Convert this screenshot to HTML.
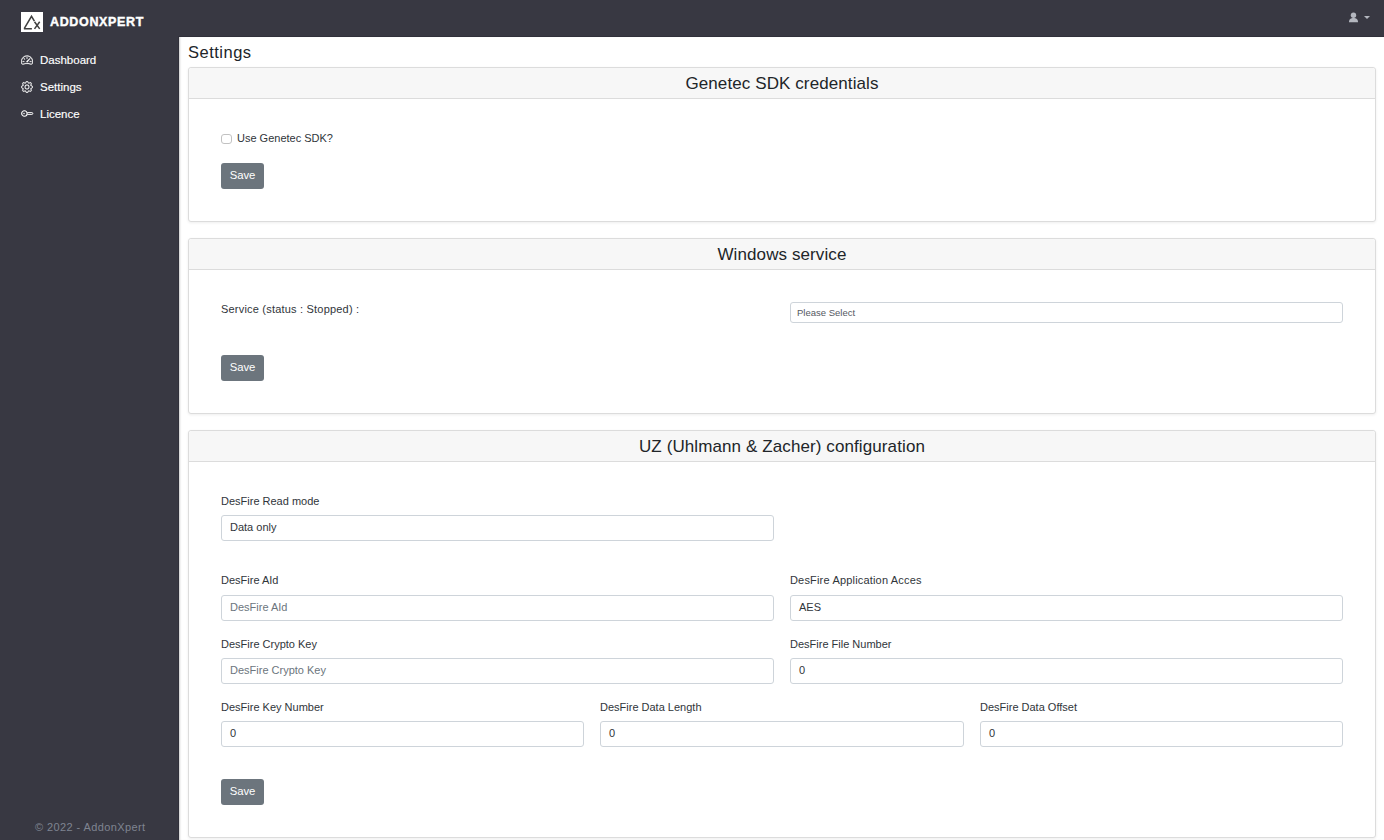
<!DOCTYPE html>
<html><head><meta charset="utf-8">
<style>
*{box-sizing:border-box;margin:0;padding:0}
html,body{width:1384px;height:840px;overflow:hidden;background:#fff;font-family:"Liberation Sans",sans-serif;color:#212529}
.abs{position:absolute;white-space:nowrap}
#top{position:absolute;left:0;top:0;width:1384px;height:37px;background:#383842}
#cline{position:absolute;left:178px;top:36px;width:1206px;height:804px;background:#30303a}
#content{position:absolute;left:179px;top:37px;width:1205px;height:803px;background:#fff;box-shadow:inset 2px 0 2px -1px rgba(0,0,0,.2)}
#side{position:absolute;left:0;top:37px;width:179px;height:803px;background:#383842}
.logo{position:absolute;left:21px;top:12px;width:22px;height:20px;background:#fff}
.brand{left:50px;top:15px;font-size:12.5px;line-height:15px;font-weight:700;color:#fff;letter-spacing:0.65px;-webkit-text-stroke:0.4px #fff}
.nav{left:40px;font-size:11.5px;line-height:14px;color:#fff;-webkit-text-stroke:0.15px #fff}
.foot{left:35px;top:820px;font-size:11px;line-height:14px;color:#7f8491;letter-spacing:0.4px}
.ptitle{left:188px;top:42px;font-size:16.5px;line-height:20px;color:#212529;letter-spacing:0.5px}
.card{position:absolute;left:188px;width:1188px;border:1px solid #dcdcdc;border-radius:3px;background:#fff;box-shadow:0 1px 3px rgba(0,0,0,.07)}
.ch{position:absolute;left:0;top:0;right:0;height:31px;background:#f7f7f7;border-bottom:1px solid #dcdcdc;border-radius:3px 3px 0 0;font-size:17px;line-height:31px;text-align:center;color:#212529;letter-spacing:0.1px}
.lbl{font-size:11px;line-height:13px;color:#30353a}
.inp{position:absolute;height:26px;border:1px solid #ced4da;border-radius:3px;background:#fff;font-size:11px;line-height:22px;padding-left:8px;color:#30353a}
.ph{color:#6c757d}
.btn{position:absolute;left:221px;width:43px;height:26px;background:#6c757d;border-radius:3px;color:#fff;font-size:11.3px;line-height:24px;text-align:center}
.cb{position:absolute;left:221px;top:134px;width:11px;height:10px;border:1px solid #c2c2c2;border-radius:3px;background:#fff}
</style></head><body>
<div id="top"></div>
<div id="side"></div>
<div id="cline"></div><div id="content"></div>
<div class="logo">
<svg width="22" height="20" viewBox="0 0 22 20" style="position:absolute;left:0;top:0">
<path d="M3.2 16.6 L10.5 4.3 L13.4 9.2 M2.9 16.7 L10.9 16.7" fill="none" stroke="#404040" stroke-width="1.5"/>
<path d="M13.5 9.7 L18.7 16.9 M18.7 9.7 L13.5 16.9" fill="none" stroke="#404040" stroke-width="1.5"/>
</svg>
</div>
<div class="abs brand">ADDONXPERT</div>
<!-- user icon -->
<svg class="abs" style="left:1344px;top:8px" width="20" height="20" viewBox="1344 8 20 20"><circle cx="1353.5" cy="15.2" r="2.7" fill="#b4b7bf"/><path d="M1349 22.2 C1349 19 1350.8 17.9 1353.5 17.9 C1356.2 17.9 1358 19 1358 22.2 Z" fill="#b4b7bf"/></svg>
<div class="abs" style="left:1363.8px;top:15.8px;width:0;height:0;border-top:3.7px solid #b4b7bf;border-left:3.7px solid transparent;border-right:3.7px solid transparent"></div>

<!-- sidebar nav -->
<svg class="abs" style="left:21px;top:54px" width="12" height="12" viewBox="0 0 16 16"><g fill="#fff" stroke="#fff" stroke-width="0.3">
<path d="M8 4a.5.5 0 0 1 .5.5V6a.5.5 0 0 1-1 0V4.5A.5.5 0 0 1 8 4zM3.732 5.732a.5.5 0 0 1 .707 0l.915.914a.5.5 0 1 1-.708.708l-.914-.915a.5.5 0 0 1 0-.707zM2 10a.5.5 0 0 1 .5-.5h1.586a.5.5 0 0 1 0 1H2.5A.5.5 0 0 1 2 10zm9.5 0a.5.5 0 0 1 .5-.5h1.5a.5.5 0 0 1 0 1H12a.5.5 0 0 1-.5-.5zm.754-4.246a.389.389 0 0 0-.527-.02L7.547 9.31a.91.91 0 1 0 1.302 1.258l3.434-4.297a.389.389 0 0 0-.029-.518z"/>
<path fill-rule="evenodd" d="M0 10a8 8 0 1 1 15.547 2.661c-.442 1.253-1.845 1.602-2.932 1.25C11.309 13.488 9.475 13 8 13c-1.474 0-3.310.488-4.615.911-1.087.352-2.490.003-2.932-1.25A7.988 7.988 0 0 1 0 10zm8-7a7 7 0 0 0-6.603 9.329c.203.575.923.876 1.680.630C4.397 12.533 6.358 12 8 12s3.604.532 4.923.96c.757.245 1.477-.056 1.680-.631A7 7 0 0 0 8 3z"/>
</g></svg>
<div class="abs nav" style="top:53px">Dashboard</div>
<svg class="abs" style="left:21px;top:80.5px" width="12" height="12" viewBox="0 0 16 16"><g fill="#fff" stroke="#fff" stroke-width="0.3">
<path d="M8 4.754a3.246 3.246 0 1 0 0 6.492 3.246 3.246 0 0 0 0-6.492zM5.754 8a2.246 2.246 0 1 1 4.492 0 2.246 2.246 0 0 1-4.492 0z"/>
<path d="M9.796 1.343c-.527-1.790-3.065-1.790-3.592 0l-.094.319a.873.873 0 0 1-1.255.520l-.292-.160c-1.640-.892-3.433.902-2.540 2.541l.159.292a.873.873 0 0 1-.520 1.255l-.319.094c-1.790.527-1.790 3.065 0 3.592l.319.094a.873.873 0 0 1 .520 1.255l-.160.292c-.892 1.640.901 3.434 2.541 2.540l.292-.159a.873.873 0 0 1 1.255.520l.094.319c.527 1.790 3.065 1.790 3.592 0l.094-.319a.873.873 0 0 1 1.255-.520l.292.160c1.640.893 3.434-.902 2.540-2.541l-.159-.292a.873.873 0 0 1 .520-1.255l.319-.094c1.790-.527 1.790-3.065 0-3.592l-.319-.094a.873.873 0 0 1-.520-1.255l.160-.292c.893-1.640-.902-3.433-2.541-2.540l-.292.159a.873.873 0 0 1-1.255-.520l-.094-.319zm-2.633.283c.246-.835 1.428-.835 1.674 0l.094.319a1.873 1.873 0 0 0 2.693 1.115l.291-.160c.764-.415 1.600.420 1.184 1.185l-.159.292a1.873 1.873 0 0 0 1.116 2.692l.318.094c.835.246.835 1.428 0 1.674l-.319.094a1.873 1.873 0 0 0-1.115 2.693l.160.291c.415.764-.420 1.600-1.185 1.184l-.291-.159a1.873 1.873 0 0 0-2.693 1.116l-.094.318c-.246.835-1.428.835-1.674 0l-.094-.319a1.873 1.873 0 0 0-2.692-1.115l-.292.160c-.764.415-1.600-.420-1.184-1.185l.159-.291A1.873 1.873 0 0 0 1.945 8.930l-.319-.094c-.835-.246-.835-1.428 0-1.674l.319-.094A1.873 1.873 0 0 0 3.060 4.377l-.160-.292c-.415-.764.420-1.600 1.185-1.184l.292.159a1.873 1.873 0 0 0 2.692-1.115l.094-.319z"/>
</g></svg>
<div class="abs nav" style="top:80px">Settings</div>
<svg class="abs" style="left:21px;top:109px" width="13" height="9" viewBox="0 0 13 9"><g fill="none" stroke="#fff">
<circle cx="3.4" cy="4.5" r="2.75" stroke-width="1.1"/>
<path d="M6.3 3.6 H10.9 A0.9 0.9 0 0 1 10.9 5.4 H6.3" stroke-width="0.95"/>
</g><circle cx="3" cy="4.5" r="0.75" fill="#fff"/></svg>
<div class="abs nav" style="top:107px">Licence</div>
<div class="abs foot">© 2022 - AddonXpert</div>

<!-- content -->
<div class="abs ptitle">Settings</div>

<div class="card" style="top:67px;height:155px"><div class="ch">Genetec SDK credentials</div></div>
<div class="cb"></div>
<div class="abs lbl" style="left:237px;top:132px">Use Genetec SDK?</div>
<div class="btn" style="top:163px">Save</div>

<div class="card" style="top:238px;height:176px"><div class="ch">Windows service</div></div>
<div class="abs lbl" style="left:221px;top:303px;letter-spacing:0.2px">Service (status : Stopped) :</div>
<div class="inp" style="left:790px;top:302px;width:553px;height:21px;font-size:9.5px;line-height:19px;padding-left:6px;color:#55595f">Please Select</div>
<div class="btn" style="top:355px">Save</div>

<div class="card" style="top:430px;height:408px"><div class="ch">UZ (Uhlmann &amp; Zacher) configuration</div></div>
<div class="abs lbl" style="left:221px;top:495px">DesFire Read mode</div>
<div class="inp" style="left:221px;top:515px;width:553px">Data only</div>

<div class="abs lbl" style="left:221px;top:574px">DesFire AId</div>
<div class="inp ph" style="left:221px;top:595px;width:553px">DesFire AId</div>
<div class="abs lbl" style="left:790px;top:574px;letter-spacing:0.18px">DesFire Application Acces</div>
<div class="inp" style="left:790px;top:595px;width:553px">AES</div>

<div class="abs lbl" style="left:221px;top:638px">DesFire Crypto Key</div>
<div class="inp ph" style="left:221px;top:658px;width:553px">DesFire Crypto Key</div>
<div class="abs lbl" style="left:790px;top:638px">DesFire File Number</div>
<div class="inp" style="left:790px;top:658px;width:553px">0</div>

<div class="abs lbl" style="left:221px;top:701px">DesFire Key Number</div>
<div class="inp" style="left:221px;top:721px;width:363px">0</div>
<div class="abs lbl" style="left:600px;top:701px">DesFire Data Length</div>
<div class="inp" style="left:600px;top:721px;width:364px">0</div>
<div class="abs lbl" style="left:980px;top:701px">DesFire Data Offset</div>
<div class="inp" style="left:980px;top:721px;width:363px">0</div>
<div class="btn" style="top:779px">Save</div>
</body></html>
